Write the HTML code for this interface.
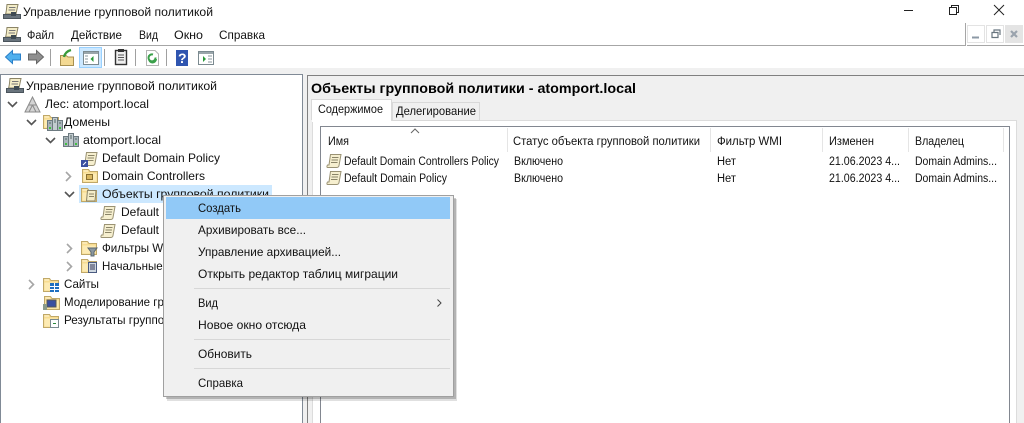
<!DOCTYPE html>
<html><head><meta charset="utf-8"><style>
html,body{margin:0;padding:0;width:1024px;height:423px;overflow:hidden;background:#f0f0f0}
svg{display:block}
text{font-family:"Liberation Sans",sans-serif;font-size:12px;fill:#111}
.s{font-size:11.5px}
</style></head><body>
<svg width="1024" height="423" viewBox="0 0 1024 423" xmlns="http://www.w3.org/2000/svg">
<defs>
<g id="scroll"><path d="M4.500 1.500H15L13 12.500C13 14 11.500 14.500 10.500 14.500H1.500C1 14.500 .5 13.500 1.500 12H3Z" fill="#f6efcf" stroke="#9a9274"/><path d="M6 4.500H12.500M5.500 7H12M5 9.500H11.500" stroke="#8a8468" fill="none"/></g>
<g id="folder"><path d="M.5 4V1.500H6.500L8 3.500H15.500V14.500H.5Z" fill="#f7dc92" stroke="#c0a868"/><path d="M1.500 5.500H14.500V13.500H1.500Z" fill="#fdebb4"/><path d="M1.500 2.500H6V3.500H1.500Z" fill="#fff6d8"/></g>
<g id="gpm"><path d="M4 .5H15L13 10H2.500C3.500 8 3.500 4 4 .5Z" fill="#f4edc8" stroke="#8b8466"/><path d="M6 3.500H12.500M5.500 6H12" stroke="#777"/><rect x=".5" y="10.500" width="17" height="4" fill="#69747d" stroke="#4a545c"/><rect x="8" y="8" width="5" height="4" fill="#3e4a52"/></g>
<g id="srv"><rect x="1.500" y="4.500" width="5" height="10" fill="#a9b5bb" stroke="#6d7a80"/><rect x="6.500" y="1.500" width="5" height="13" fill="#c3ccd0" stroke="#6d7a80"/><rect x="11.500" y="4.500" width="5" height="10" fill="#a9b5bb" stroke="#6d7a80"/><path d="M3 12h2M13 12h2" stroke="#40c040" stroke-width="2"/><path d="M8 4h2M8 6h2M3 7h2M13 7h2" stroke="#566"/></g>
<path id="down" d="M0 0L4.500 4.500L9 0" fill="none" stroke="#555" stroke-width="1.600"/>
<path id="right" d="M0 0L4.500 4.500L0 9" fill="none" stroke="#a6a6a6" stroke-width="1.600"/>
</defs>

<!-- window top -->
<rect width="1024" height="68" fill="#fff"/>
<use href="#gpm" x="3" y="4"/>
<text x="23" y="16" textLength="190" lengthAdjust="spacingAndGlyphs">Управление групповой политикой</text>
<path d="M904 10.500H913" stroke="#222"/>
<path d="M949.500 7.500h7v7h-7zM951.500 7.500v-2h7v7h-2" fill="none" stroke="#222"/>
<path d="M994 5L1004 15M1004 5L994 15" stroke="#222"/>
<use href="#gpm" x="3" y="27"/>
<text x="27" y="39" textLength="27" lengthAdjust="spacingAndGlyphs">Файл</text>
<text x="71" y="39" textLength="51" lengthAdjust="spacingAndGlyphs">Действие</text>
<text x="139" y="39" textLength="19" lengthAdjust="spacingAndGlyphs">Вид</text>
<text x="174" y="39" textLength="29" lengthAdjust="spacingAndGlyphs">Окно</text>
<text x="219" y="39" textLength="46" lengthAdjust="spacingAndGlyphs">Справка</text>
<path d="M0 45.500H965.500V23" fill="none" stroke="#a6a6a6"/>
<path d="M967 45.500H1024" stroke="#a6a6a6"/>
<rect x="967.500" y="25.500" width="17" height="17" fill="#fff" stroke="#e3e3e3"/>
<rect x="986.500" y="25.500" width="17" height="17" fill="#fff" stroke="#e3e3e3"/>
<rect x="1005" y="25" width="18" height="18" fill="#e4e4e4"/>
<path d="M972 37.500H979" stroke="#8c99a6" stroke-width="2"/>
<path d="M992 32.500h6v5h-6zM994 32v-2h6v5" fill="none" stroke="#68757f" stroke-width="1.200"/>
<path d="M1011 31L1017 37M1017 31L1011 37" stroke="#9aa3ad" stroke-width="2.200"/>

<!-- toolbar -->
<path d="M5.500 57L12.500 50.500V54H20.500V60H12.500V63.500Z" fill="#4fb0ee" stroke="#2a7fc8"/>
<path d="M43.500 57L36.500 50.500V54H28.500V60H36.500V63.500Z" fill="#909090" stroke="#666"/>
<path d="M50.500 49V66M104.500 49V66M135.500 49V66M166.500 49V66" stroke="#a0a0a0"/>
<path d="M60.500 55.500H66L68 57H73.500V65.500H60.500Z" fill="#f3d993" stroke="#a89050"/>
<path d="M64 57C65 53 67 51 71 50" stroke="#3a9a3a" stroke-width="2.400" fill="none"/>
<rect x="79.500" y="47.500" width="22" height="20" fill="#cce8ff" stroke="#99d1ff"/>
<rect x="83.500" y="51.500" width="15" height="13" fill="#fff" stroke="#7b8a90"/><rect x="84" y="52" width="14" height="2" fill="#9aa6ab"/>
<path d="M93.500 56V62L90.500 59Z" fill="#2a9a3a"/><path d="M85 56h3M85 59h3M85 62h3" stroke="#8a979c"/>
<rect x="115.500" y="50.500" width="11" height="14" fill="#eee" stroke="#333" stroke-width="1.400"/><rect x="118" y="49" width="6" height="3" fill="#333"/><path d="M118 55h6M118 57.500h6M118 60h6" stroke="#555"/>
<path d="M146.500 50.500H155L158.500 54V65.500H146.500Z" fill="#fff" stroke="#b4b4b4"/>
<path d="M155.500 57.500A3.500 3.500 0 1 1 153 54.500M156 59A3.500 3.500 0 0 1 149 59" fill="none" stroke="#3aa04a" stroke-width="2"/>
<rect x="176" y="50" width="12" height="16" fill="#2f55b0"/><text x="178" y="63" style="font-size:14px;font-weight:bold;fill:#fff">?</text>
<rect x="198.500" y="51.500" width="15" height="13" fill="#fff" stroke="#7b8a90"/><rect x="199" y="52" width="14" height="2" fill="#9aa6ab"/>
<path d="M203 56V62L206 59Z" fill="#2a9a3a"/><path d="M208 56h4M208 59h4M208 62h4" stroke="#8a979c"/>

<!-- tree pane -->
<rect x="0" y="74" width="303" height="349" fill="#808a96"/>
<rect x="1" y="75" width="301" height="348" fill="#fff"/>
<rect x="79" y="185" width="193" height="18" fill="#cce8ff"/>
<use href="#gpm" x="6" y="78"/>
<text x="26" y="90" textLength="191" lengthAdjust="spacingAndGlyphs">Управление групповой политикой</text>
<use href="#down" x="8" y="102"/>
<path d="M25 112L32.500 97L40 112Z" fill="#d4d4d4" stroke="#8a8a8a"/><path d="M29 105H36M32.500 105L29 112M32.500 105L36 112" stroke="#8a8a8a" fill="none"/>
<text x="45" y="108" textLength="104" lengthAdjust="spacingAndGlyphs">Лес: atomport.local</text>
<use href="#down" x="27" y="120"/>
<use href="#folder" x="43" y="114"/><use href="#srv" x="46" y="116"/>
<text x="64" y="126" textLength="46" lengthAdjust="spacingAndGlyphs">Домены</text>
<use href="#down" x="46" y="138"/>
<use href="#srv" x="62" y="132"/>
<text x="83" y="144" textLength="78" lengthAdjust="spacingAndGlyphs">atomport.local</text>
<use href="#scroll" x="82" y="151"/><rect x="81" y="160" width="7" height="7" fill="#3a4fa0"/><path d="M83 165L86 162" stroke="#fff"/>
<text x="102" y="162" textLength="118" lengthAdjust="spacingAndGlyphs">Default Domain Policy</text>
<use href="#right" x="66" y="172"/>
<use href="#folder" x="82" y="168"/><rect x="86.500" y="174.500" width="6" height="5" fill="#d9b760" stroke="#8a7030"/>
<text x="102" y="180" textLength="103" lengthAdjust="spacingAndGlyphs">Domain Controllers</text>
<use href="#down" x="65" y="192"/>
<use href="#folder" x="81" y="187"/><path d="M87.500 190.500H96L95 201H86.500Z" fill="#f4edc8" stroke="#8b8466"/><path d="M89 194h5M89 196.500h5" stroke="#8a8468"/>
<text x="102" y="198" textLength="167" lengthAdjust="spacingAndGlyphs">Объекты групповой политики</text>
<use href="#scroll" x="100" y="205"/>
<text x="121" y="216" textLength="38" lengthAdjust="spacingAndGlyphs">Default</text>
<use href="#scroll" x="100" y="223"/>
<text x="121" y="234" textLength="38" lengthAdjust="spacingAndGlyphs">Default</text>
<use href="#right" x="67" y="244"/>
<use href="#folder" x="81" y="240"/><path d="M88 248H97L94 252V256H91V252Z" fill="#8a97a0" stroke="#5a6770"/>
<text x="102" y="252" textLength="74" lengthAdjust="spacingAndGlyphs">Фильтры WMI</text>
<use href="#right" x="67" y="262"/>
<use href="#folder" x="81" y="258"/><rect x="88.500" y="262.500" width="8" height="10" fill="#cfd8e0" stroke="#4a5a80"/><path d="M90 265h5M90 267h5M90 269h5" stroke="#335"/>
<text x="102" y="270" textLength="218" lengthAdjust="spacingAndGlyphs">Начальные объекты групповой политики</text>
<use href="#right" x="29" y="280"/>
<use href="#folder" x="43" y="277"/><rect x="50" y="283" width="9" height="9" fill="#1f6fc0"/><path d="M50 286.500H59M50 289.500H59M54.500 283V292" stroke="#fff"/>
<text x="64" y="288" textLength="35" lengthAdjust="spacingAndGlyphs">Сайты</text>
<use href="#folder" x="44" y="295"/><rect x="47" y="300" width="9" height="7" fill="#3a4fa0" stroke="#555"/><rect x="43" y="304" width="4" height="6" fill="#8a9a8a"/>
<text x="64" y="306" textLength="195" lengthAdjust="spacingAndGlyphs">Моделирование групповой политики</text>
<use href="#folder" x="43" y="313"/><rect x="50.500" y="319.500" width="8" height="8" fill="#fff" stroke="#7a8a90"/><path d="M53 323.500h3" stroke="#2a8a3a"/>
<text x="64" y="324" textLength="172" lengthAdjust="spacingAndGlyphs">Результаты групповой политики</text>

<!-- right pane -->
<rect x="307" y="74" width="717" height="349" fill="#f0f0f0"/>
<path d="M307.500 423V75.500H1024" fill="none" stroke="#808080"/>
<text x="311" y="93" textLength="325" lengthAdjust="spacingAndGlyphs" style="font-size:14px;font-weight:bold;fill:#000">Объекты групповой политики - atomport.local</text>
<rect x="312" y="120" width="705" height="303" fill="#fff"/>
<path d="M312.500 423V120.500H1016.500V423" fill="none" stroke="#dcdcdc"/>
<rect x="392.500" y="102.500" width="87" height="18" fill="#f0f0f0" stroke="#d9d9d9"/>
<path d="M311.500 120V99.500H391.500V120" fill="#fff" stroke="#d9d9d9"/>
<rect x="312" y="118" width="79" height="4" fill="#fff"/>
<text x="318" y="113" textLength="65" lengthAdjust="spacingAndGlyphs">Содержимое</text>
<text x="396" y="115" textLength="80" lengthAdjust="spacingAndGlyphs">Делегирование</text>
<path d="M320.500 423V126.500H1009.500V423" fill="none" stroke="#828790"/>
<path d="M411 133L415 129L419 133" fill="none" stroke="#666"/>
<path d="M507.500 128V152M710.500 128V152M822.500 128V152M908.500 128V152M1003.500 128V152" stroke="#e5e5e5"/>
<g class="h">
<text class="s" x="328" y="145" textLength="21" lengthAdjust="spacingAndGlyphs">Имя</text>
<text class="s" x="513" y="145" textLength="187" lengthAdjust="spacingAndGlyphs">Статус объекта групповой политики</text>
<text class="s" x="717" y="145" textLength="65" lengthAdjust="spacingAndGlyphs">Фильтр WMI</text>
<text class="s" x="829" y="145" textLength="45" lengthAdjust="spacingAndGlyphs">Изменен</text>
<text class="s" x="915" y="145" textLength="49" lengthAdjust="spacingAndGlyphs">Владелец</text>
</g>
<use href="#scroll" x="326" y="153"/>
<text class="s" x="344" y="165" textLength="155" lengthAdjust="spacingAndGlyphs">Default Domain Controllers Policy</text>
<text class="s" x="514" y="165" textLength="49" lengthAdjust="spacingAndGlyphs">Включено</text>
<text class="s" x="717" y="165" textLength="19" lengthAdjust="spacingAndGlyphs">Нет</text>
<text class="s" x="829" y="165" textLength="71" lengthAdjust="spacingAndGlyphs">21.06.2023 4...</text>
<text class="s" x="915" y="165" textLength="82" lengthAdjust="spacingAndGlyphs">Domain Admins...</text>
<use href="#scroll" x="326" y="170"/>
<text class="s" x="344" y="182" textLength="103" lengthAdjust="spacingAndGlyphs">Default Domain Policy</text>
<text class="s" x="514" y="182" textLength="49" lengthAdjust="spacingAndGlyphs">Включено</text>
<text class="s" x="717" y="182" textLength="19" lengthAdjust="spacingAndGlyphs">Нет</text>
<text class="s" x="829" y="182" textLength="71" lengthAdjust="spacingAndGlyphs">21.06.2023 4...</text>
<text class="s" x="915" y="182" textLength="82" lengthAdjust="spacingAndGlyphs">Domain Admins...</text>

<!-- context menu -->
<rect x="167" y="199" width="290" height="202" fill="#000" opacity=".12"/>
<rect x="166" y="198" width="290" height="201" fill="#000" opacity=".2"/>
<rect x="163.500" y="195.500" width="290" height="201" fill="#f0f0f0" stroke="#a0a0a0"/>
<rect x="166" y="197" width="284" height="22" fill="#91c9f7"/>
<path d="M194 288.500H450M194 339.500H450M194 368.500H450" stroke="#d7d7d7"/>
<text x="198" y="212" textLength="43" lengthAdjust="spacingAndGlyphs">Создать</text>
<text x="198" y="234" textLength="108" lengthAdjust="spacingAndGlyphs">Архивировать все...</text>
<text x="198" y="256" textLength="143" lengthAdjust="spacingAndGlyphs">Управление архивацией...</text>
<text x="198" y="278" textLength="200" lengthAdjust="spacingAndGlyphs">Открыть редактор таблиц миграции</text>
<text x="198" y="307" textLength="20" lengthAdjust="spacingAndGlyphs">Вид</text>
<path d="M437.500 299.500L441 303L437.500 306.500" fill="none" stroke="#444"/>
<text x="198" y="329" textLength="108" lengthAdjust="spacingAndGlyphs">Новое окно отсюда</text>
<text x="198" y="358" textLength="54" lengthAdjust="spacingAndGlyphs">Обновить</text>
<text x="198" y="387" textLength="45" lengthAdjust="spacingAndGlyphs">Справка</text>
</svg>
</body></html>
